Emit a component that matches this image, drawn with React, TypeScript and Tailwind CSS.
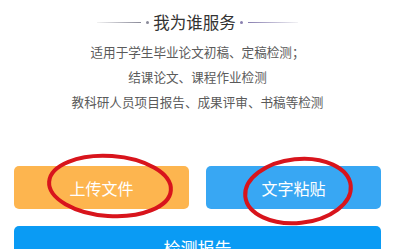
export default function App() {
  return (
    <div
      className="relative h-[249px] w-[395px] overflow-hidden bg-white"
      style={{ fontFamily: '"Noto Sans CJK SC", "Noto Sans", sans-serif' }}
    >
      <div className="flex flex-col items-center pt-[11px]">
        <div className="flex items-center">
          <span className="h-px w-[44px] bg-gradient-to-r from-[#f2f2f2] to-[#8a8a99]" />
          <span className="ml-[5px] h-[3px] w-[3px] rounded-full bg-[#8a8a99]" />
          <span className="mx-[4px] text-[16.5px] leading-[22px] text-[#333]">我为谁服务</span>
          <span className="mr-[5px] h-[3px] w-[3px] rounded-full bg-[#8a80b0]" />
          <span className="h-px w-[50px] bg-gradient-to-r from-[#8a80b0] to-[#f2f2f4]" />
        </div>
        <div className="mt-[6px] flex flex-col items-center text-[12.6px] leading-[25px] text-[#5a5a5a]">
          <p>适用于学生毕业论文初稿、定稿检测；</p>
          <p>结课论文、课程作业检测</p>
          <p>教科研人员项目报告、成果评审、书稿等检测</p>
        </div>
      </div>

      <div className="mt-[52px] flex flex-col gap-[17px] px-[14px]">
        <div className="flex gap-[17px]">
          <button className="flex h-[43px] flex-1 items-center justify-center rounded-[5px] bg-[#fdb54f] text-[16px] text-white">
            上传文件
          </button>
          <button className="flex h-[43px] flex-1 items-center justify-center rounded-[5px] bg-[#38a7f3] text-[16px] text-white">
            文字粘贴
          </button>
        </div>
        <button className="flex h-[43px] items-center justify-center rounded-[5px] bg-[#0a9bf4] text-[17px] text-white">
          检测报告
        </button>
      </div>

      <svg className="pointer-events-none absolute left-0 top-0" width="395" height="249">
        <ellipse
          cx="110"
          cy="186"
          rx="61"
          ry="30"
          transform="rotate(4 110 186)"
          fill="none"
          stroke="#d8141c"
          strokeWidth="4"
        />
        <ellipse
          cx="298"
          cy="191"
          rx="53"
          ry="32"
          transform="rotate(-6 298 191)"
          fill="none"
          stroke="#d8141c"
          strokeWidth="4"
        />
      </svg>
    </div>
  );
}
